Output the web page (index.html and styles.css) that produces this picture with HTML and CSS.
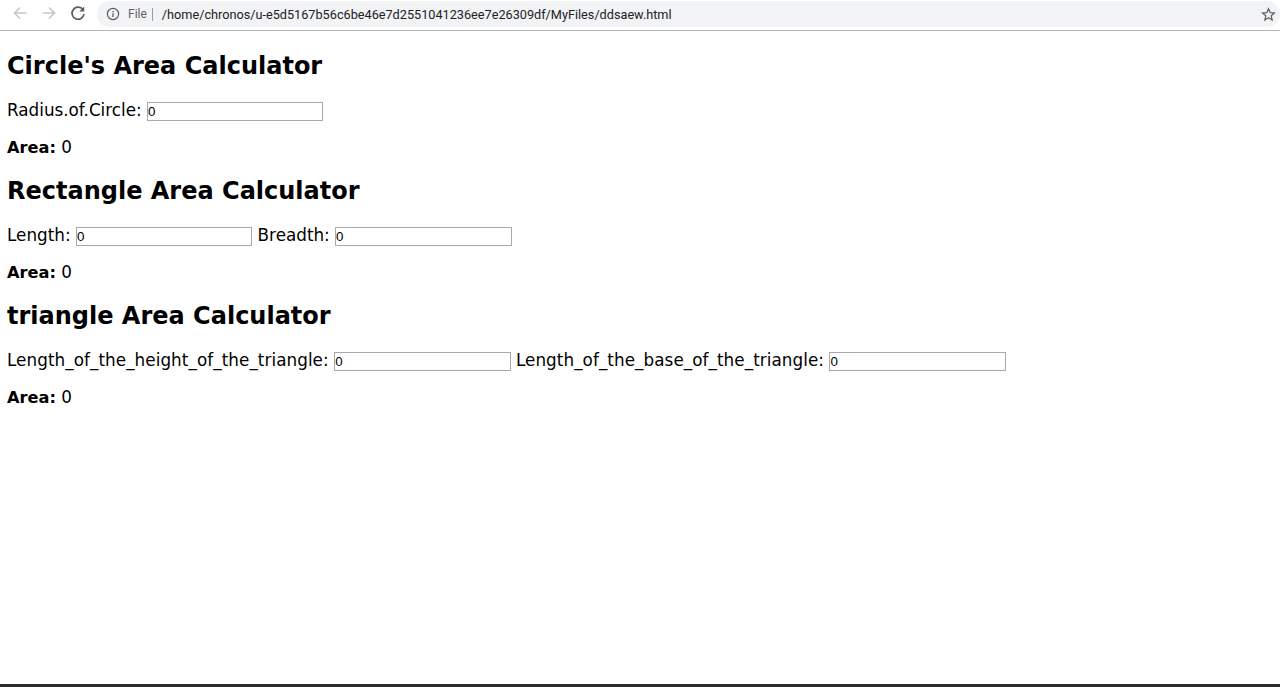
FILE: index.html
```html
<!DOCTYPE html>
<html lang="en">
<head>
<meta charset="utf-8">
<title>ddsaew</title>
<link rel="stylesheet" href="styles.css">
</head>
<body>
<header class="toolbar">
  <svg class="nav-icon" width="16" height="16" viewBox="0 0 16 16"><path d="M14.500 8H2.500M8 2.500L2.500 8L8 13.500" fill="none" stroke="#c4c6c9" stroke-width="1.600"/></svg>
  <svg class="nav-icon" width="16" height="16" viewBox="0 0 16 16"><path d="M1.500 8H13.500M8 2.500L13.500 8L8 13.500" fill="none" stroke="#c4c6c9" stroke-width="1.600"/></svg>
  <svg class="nav-icon" width="16" height="16" viewBox="0 0 16 16"><path d="M13 4.800A6 6 0 1 0 14 9" fill="none" stroke="#5a5c60" stroke-width="1.700"/><path d="M14.200 1.600V6.500H9.300Z" fill="#5a5c60"/></svg>
  <div class="omnibox">
    <svg class="info" width="14" height="14" viewBox="0 0 14 14"><circle cx="7" cy="7" r="5.600" fill="none" stroke="#5a5c60" stroke-width="1.200"/><path d="M7 6.200V10M7 4V5.200" stroke="#5a5c60" stroke-width="1.300"/></svg>
    <span class="scheme">File</span>
    <span class="url">/home/chronos/u-e5d5167b56c6be46e7d2551041236ee7e26309df/MyFiles/ddsaew.html</span>
    <svg class="star" width="15" height="15" viewBox="0 0 16 16"><path d="M8 1.800L9.800 6L14.300 6.400L10.900 9.400L11.900 13.800L8 11.500L4.100 13.800L5.100 9.400L1.700 6.400L6.200 6Z" fill="none" stroke="#5a5c60" stroke-width="1.300"/></svg>
  </div>
</header>
<main class="page">
  <h2>Circle's Area Calculator</h2>
  <p>Radius.of.Circle: <input type="text" value="0"></p>
  <p><b>Area:</b> 0</p>
  <h2>Rectangle Area Calculator</h2>
  <p>Length: <input type="text" value="0"> Breadth: <input type="text" value="0"></p>
  <p><b>Area:</b> 0</p>
  <h2>triangle Area Calculator</h2>
  <p class="long">Length_of_the_height_of_the_triangle: <input type="text" value="0"> Length_of_the_base_of_the_triangle: <input type="text" value="0"></p>
  <p><b>Area:</b> 0</p>
</main>
<div class="shelf"></div>
</body>
</html>
```
FILE: styles.css
```css
html, body {
  margin: 0;
  height: 100%;
  background: #fff;
  overflow: hidden;
}
body {
  display: flex;
  flex-direction: column;
  height: 687px;
}
.toolbar {
  height: 30px;
  box-sizing: content-box;
  border-bottom: 1px solid #b6b6b8;
  display: flex;
  align-items: flex-start;
  padding-left: 12px;
  gap: 13px;
  flex: none;
}
.nav-icon {
  flex: none;
  margin-top: 5px;
}
.omnibox {
  flex: 1;
  height: 26px;
  margin-top: 1px;
  margin-left: -2px;
  background: #f1f3f4;
  border-radius: 13px;
  display: flex;
  align-items: center;
  padding-left: 9px;
  font: 12.7px "Roboto", "Liberation Sans", sans-serif;
}
.info { flex: none; }
.scheme {
  color: #5f6368;
  font-size: 12px;
  margin-left: 8px;
  padding-right: 5px;
  border-right: 1px solid #9a9ca0;
  line-height: 13px;
}
.url {
  color: #202124;
  margin-left: 9px;
  flex: 1;
}
.star {
  margin-right: 4px;
  flex: none;
}
.page {
  flex: 1;
  padding: 0 7px;
  font: 16.8px/20px "DejaVu Sans", sans-serif;
  color: #000;
}
h2 {
  font-size: 24px;
  line-height: 30px;
  font-weight: bold;
  margin: 20px 0 19px;
}
p {
  margin: 16px 0;
}
p + p {
  margin-top: 15.300px;
  margin-bottom: 16.700px;
}
p b {
  font-size: 16.2px;
}
p + h2 {
  margin-top: 17.9px;
}
.long {
  letter-spacing: 0.06px;
}
input {
  width: 176.4px;
  height: 19px;
  box-sizing: border-box;
  border: 1px solid #a9a9a9;
  padding: 1px 0;
  font: 13.33px "Liberation Sans", sans-serif;
  letter-spacing: normal;
  color: #000;
  background: #fff;
  margin: 0;
}
.shelf {
  height: 3px;
  background: #2b2b2e;
  flex: none;
}
```
